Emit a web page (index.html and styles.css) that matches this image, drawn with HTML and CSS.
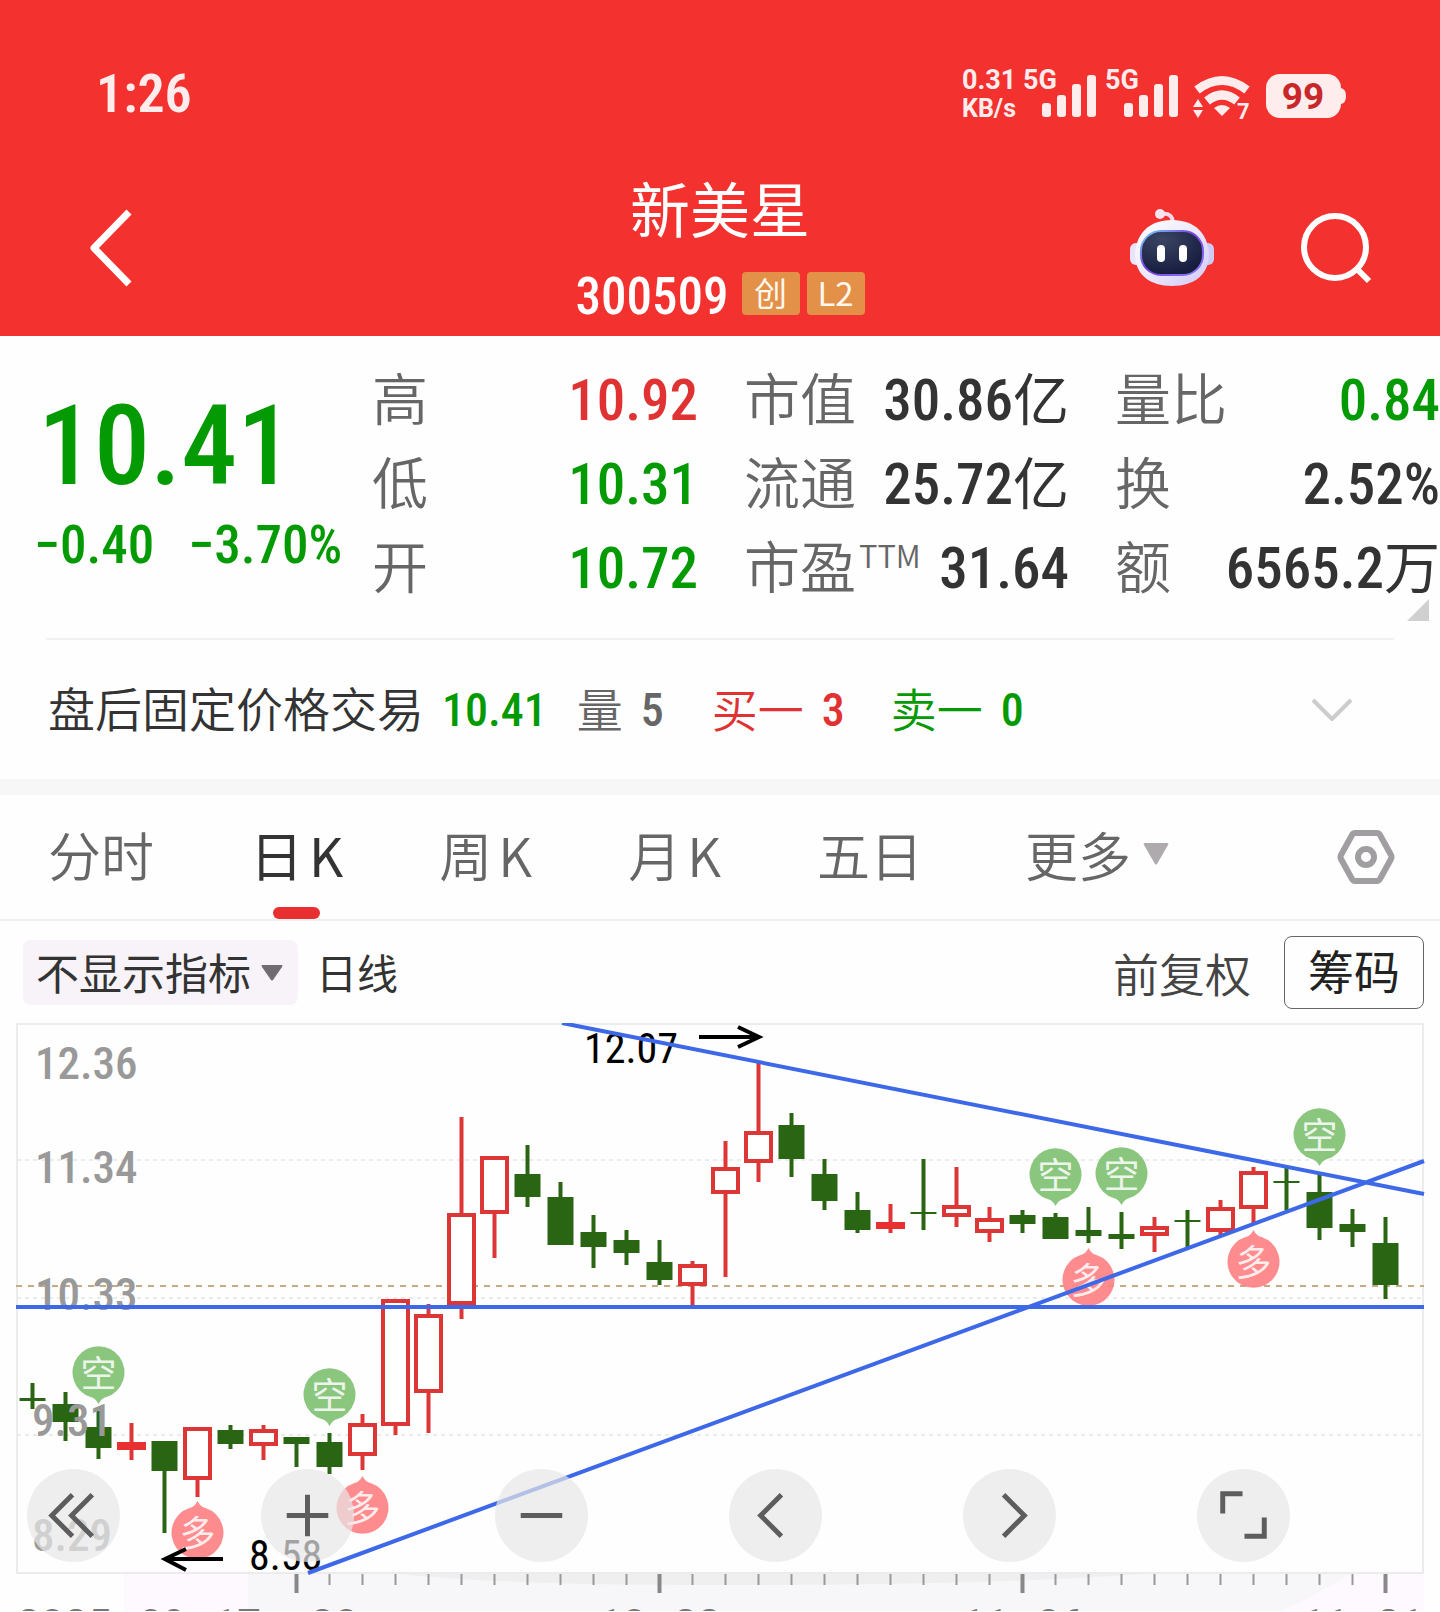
FILE: index.html
```
<!DOCTYPE html>
<html lang="zh-CN">
<head>
<meta charset="utf-8">
<meta name="viewport" content="width=device-width, initial-scale=1">
<title>新美星 300509</title>
<link rel="stylesheet" href="styles.css">
</head>
<body>
<header class="top">
  <div class="status">
    <time class="clock num">1:26</time>
    <svg class="status-icons" width="386" height="60" viewBox="-2 -6 386 60" role="img" aria-label="网络与电量">
      <g class="status-text">
        <text x="0" y="20">0.31</text>
        <text x="0" y="48" class="small">KB/s</text>
        <text x="61" y="20">5G</text>
        <text x="143" y="20">5G</text>
      </g>
      <g class="status-fill">
        <rect x="80" y="34" width="9" height="14" rx="3"/><rect x="95" y="26" width="9" height="22" rx="3"/><rect x="110" y="15" width="9" height="33" rx="3"/><rect x="125" y="6" width="9" height="42" rx="3"/>
        <rect x="162" y="34" width="9" height="14" rx="3"/><rect x="177" y="26" width="9" height="22" rx="3"/><rect x="192" y="15" width="9" height="33" rx="3"/><rect x="207" y="6" width="9" height="42" rx="3"/>
        <path d="M260 47l-8-8q8-6 16 0z"/>
        <path d="M236 30l5 8h-10zM236 49l-5-8h10z"/>
        <rect x="304" y="5" width="75" height="44" rx="14"/>
        <path d="M379 19q5 1 5 8t-5 8z"/>
      </g>
      <path class="wifi" d="M235 21q25-19 50 0M245 32q15-12 30 0"/>
      <text x="275" y="50" class="wifi-gen">7</text>
      <text x="341" y="40" class="charge">99</text>
    </svg>
  </div>
  <nav class="nav">
    <button class="icon-btn back" aria-label="返回">
      <svg width="46" height="80" viewBox="0 0 46 80"><path d="M43 4L8 40l35 36"/></svg>
    </button>
    <div class="stock">
      <h1>新美星</h1>
      <div class="code"><span class="num">300509</span><span class="badges"><span class="badge">创</span><span class="badge">L2</span></span></div>
    </div>
    <div class="nav-actions">
      <button class="icon-btn" aria-label="智能助手">
        <svg width="86" height="80" viewBox="0 0 86 80">
          <defs>
            <linearGradient id="shell" x1="0" y1="0" x2="1" y2="1"><stop offset="0" stop-color="#fff"/><stop offset=".5" stop-color="#ece8fd"/><stop offset="1" stop-color="#cfc8f6"/></linearGradient>
            <linearGradient id="rim" x1="0" y1="0" x2="1" y2="1"><stop offset="0" stop-color="#6fd6f0"/><stop offset=".45" stop-color="#7a3fe0"/><stop offset="1" stop-color="#8a7cf5"/></linearGradient>
            <radialGradient id="face" cx=".35" cy=".2" r=".8"><stop offset="0" stop-color="#3c4464"/><stop offset="1" stop-color="#151c3d"/></radialGradient>
          </defs>
          <path d="M32 6q12-2 12 10" fill="none" stroke="#f3d9ea" stroke-width="4"/>
          <circle cx="31" cy="6" r="5" fill="#f6e3f3"/>
          <rect x="1" y="35" width="12" height="22" rx="6" fill="#e9e4fb"/><rect x="73" y="35" width="12" height="22" rx="6" fill="#cfc9f5"/>
          <path d="M43 12C66 12 79 26 80 46C80 66 66 78 43 78S6 66 6 46C7 26 20 12 43 12z" fill="url(#shell)"/>
          <rect x="12" y="23" width="62" height="44" rx="20" fill="url(#face)" stroke="url(#rim)" stroke-width="2"/>
          <rect x="28" y="37" width="8" height="17" rx="4" fill="#fff"/><rect x="50" y="37" width="8" height="17" rx="4" fill="#fff"/>
        </svg>
      </button>
      <button class="icon-btn search" aria-label="搜索">
        <svg width="72" height="72" viewBox="0 0 72 72"><circle cx="34" cy="35" r="31"/><path d="M56 57l12 12"/></svg>
      </button>
    </div>
  </nav>
</header>

<main>
<section class="quote">
  <div class="price num down">
    <strong>10.41</strong>
    <div class="change"><span>−0.40</span><span>−3.70%</span></div>
  </div>
  <dl>
    <div><dt>高</dt><dd class="num up">10.92</dd></div>
    <div><dt>低</dt><dd class="num down">10.31</dd></div>
    <div><dt>开</dt><dd class="num down">10.72</dd></div>
  </dl>
  <dl>
    <div><dt>市值</dt><dd class="num">30.86<span class="unit">亿</span></dd></div>
    <div><dt>流通</dt><dd class="num">25.72<span class="unit">亿</span></dd></div>
    <div><dt>市盈<sup>TTM</sup></dt><dd class="num">31.64</dd></div>
  </dl>
  <dl>
    <div><dt>量比</dt><dd class="num down">0.84</dd></div>
    <div><dt>换</dt><dd class="num">2.52%</dd></div>
    <div><dt>额</dt><dd class="num">6565.2<span class="unit">万</span></dd></div>
  </dl>
  <svg class="corner" width="22" height="22" viewBox="0 0 22 22"><path d="M22 0v22H0z"/></svg>
</section>

<section class="after-hours">
  <span class="ah-title">盘后固定价格交易</span>
  <span class="num down">10.41</span>
  <span class="pair volume"><span class="label">量</span><span class="num">5</span></span>
  <span class="pair up"><span class="label">买一</span><span class="num">3</span></span>
  <span class="pair down"><span class="label">卖一</span><span class="num">0</span></span>
  <button class="icon-btn expand" aria-label="展开"><svg width="42" height="26" viewBox="0 0 42 26"><path d="M2 3l19 19L40 3"/></svg></button>
</section>

<nav class="tabs">
  <button>分时</button>
  <button class="active">日<span>K</span></button>
  <button>周<span>K</span></button>
  <button>月<span>K</span></button>
  <button>五日</button>
  <button class="more">更多<svg width="26" height="22" viewBox="0 0 26 22"><path d="M2 0h22q2 0 1 2L14 21q-1 1-2 0L1 2q-1-2 1-2z"/></svg></button>
  <button class="settings" aria-label="设置"><svg width="58" height="56" viewBox="0 0 58 56"><path d="M18 4h22q2 0 3 2l11 20q1 2 0 4L43 50q-1 2-3 2H18q-2 0-3-2L4 30q-1-2 0-4L15 6q1-2 3-2z"/><circle cx="29" cy="28" r="8"/></svg></button>
</nav>

<div class="tools">
  <label class="indicator">
    <select aria-label="指标"><option>不显示指标</option></select>
    <svg width="22" height="16" viewBox="0 0 22 16"><path d="M1 0h20q1 0 0 2l-9 13q-1 1-2 0L1 2q-1-2 0-2z"/></svg>
  </label>
  <span class="period">日线</span>
  <button class="adjust">前复权</button>
  <button class="chips">筹码</button>
</div>

<section class="chart">
  <svg id="kline" viewBox="0 0 1440 588" role="img" aria-label="日K线图"></svg>
  <div class="controls">
    <button aria-label="折叠"><svg viewBox="0 0 94 94"><path d="M46 26L25 47l21 21M66 26L45 47l21 21"/></svg></button>
    <button aria-label="放大"><svg viewBox="0 0 94 94"><path d="M26 47h42M47 26v42"/></svg></button>
    <button aria-label="缩小"><svg viewBox="0 0 94 94"><path d="M26 47h42"/></svg></button>
    <button aria-label="左移"><svg viewBox="0 0 94 94"><path d="M53 26L32 47l21 21"/></svg></button>
    <button aria-label="右移"><svg viewBox="0 0 94 94"><path d="M41 26l21 21-21 21"/></svg></button>
    <button aria-label="全屏"><svg viewBox="0 0 94 94"><path d="M26 45V25h20M68 49v19H48"/></svg></button>
  </div>
</section>
</main>
<script src="chart.js"></script>
</body>
</html>
```
FILE: styles.css
```
* { box-sizing: border-box; }
body {
  margin: 0;
  background: #fefefe;
  color: #333;
  font-family: "Noto Sans CJK SC", sans-serif;
  overflow-x: hidden;
}
button, select {
  border: 0;
  padding: 0;
  margin: 0;
  background: none;
  color: inherit;
  font: inherit;
}
svg { display: block; }
.num { font-family: "Roboto Condensed", Roboto, "Noto Sans CJK SC", sans-serif; font-weight: 500; }
.up { color: #e03232; }
.down { color: #049a04; }
.icon-btn { display: flex; flex: none; }
.icon-btn path, .icon-btn circle { stroke-linejoin: round; }

/* header */
.top { background: #f3312f; color: #fff; }
.status {
  display: flex;
  align-items: center;
  justify-content: space-between;
  height: 160px;
  padding: 26px 94px 0 96px;
}
.clock { color: #ffecec; font-size: 54px; font-weight: 600; }
.status-icons { overflow: visible; }
.status-text { font: 700 27px Roboto, sans-serif; fill: #ffecec; }
.status-text .small { font-size: 25px; }
.status-fill { fill: #ffecec; }
.wifi { fill: none; stroke: #ffecec; stroke-width: 9; }
.wifi-gen { font: 700 22px Roboto, sans-serif; fill: #ffecec; }
.charge { font: 700 37px Roboto, sans-serif; fill: #c8282a; text-anchor: middle; }
.nav {
  display: grid;
  grid-template-columns: 1fr auto 1fr;
  align-items: center;
  height: 176px;
  padding: 0 67px 0 86px;
}
.back path { fill: none; stroke: #fff; stroke-width: 7; }
.search { fill: none; stroke: #fff; stroke-width: 6; }
.stock { text-align: center; padding-right: 19px; }
.stock h1 { margin: 0; font-size: 60px; line-height: 94px; font-weight: 400; }
.code {
  display: flex;
  align-items: center;
  justify-content: center;
  gap: 13px;
  height: 82px;
  font-size: 51px;
}
.code .num { line-height: 82px; padding-top: 4px; }
.badges { display: flex; gap: 7px; margin-bottom: 4px; }
.badge {
  width: 58px;
  height: 43px;
  border-radius: 4px;
  background: #e39048;
  color: #fff8ee;
  font-size: 33px;
  line-height: 41px;
}
.nav-actions { display: flex; align-items: center; justify-content: flex-end; gap: 86px; }

/* quote */
.quote {
  position: relative;
  display: grid;
  grid-template-columns: minmax(0, 326fr) minmax(0, 326fr) minmax(0, 325fr) minmax(0, 325fr);
  column-gap: 46px;
  padding: 20px 0 30px;
}
.price { padding: 22px 0 0 34px; white-space: nowrap; }
.price strong { display: block; padding-left: 4px; font-size: 112px; line-height: 136px; font-weight: 500; }
.change { display: flex; gap: 34px; font-size: 53px; line-height: 62px; }
.quote dl { margin: 0; }
.quote dl div { display: flex; justify-content: space-between; align-items: flex-start; height: 84px; white-space: nowrap; }
.quote dt { color: #666; font-size: 56px; line-height: 80px; font-weight: 350; }
.quote dd { margin: 0; font-size: 57px; line-height: 90px; }
.quote dd:not(.up):not(.down) { color: #333; }
.unit { font-family: "Noto Sans CJK SC", sans-serif; font-size: 56px; line-height: 1; font-weight: 400; }
.quote sup { margin-left: 3px; font-size: 31px; line-height: 1; vertical-align: 20px; }
.corner { position: absolute; right: 11px; bottom: 17px; fill: #d0d0d0; }

.after-hours {
  display: flex;
  align-items: center;
  height: 141px;
  margin: 0 46px;
  border-top: 2px solid #f1f1f1;
  font-size: 46px;
}
.ah-title { margin: 0 18px 0 2px; padding-bottom: 6px; font-size: 47px; font-weight: 350; }
.label { padding-bottom: 6px; }
.after-hours .pair { display: flex; align-items: center; gap: 18px; font-weight: 350; }
.volume { color: #666; margin: 0 48px 0 30px; }
.after-hours .pair.down { margin-left: 46px; }
.expand { margin-left: auto; padding-right: 41px; fill: none; stroke: #ccc; stroke-width: 4; }

/* tabs */
.tabs {
  display: flex;
  align-items: center;
  gap: 96px;
  height: 142px;
  padding: 0 45px 0 48px;
  border-top: 16px solid #f7f7f7;
  border-bottom: 2px solid #f0f0f0;
  color: #666;
  font-size: 53px;
  font-weight: 350;
}
.tabs button { position: relative; flex: none; line-height: 118px; padding-bottom: 6px; }
.tabs span { margin-left: 6px; }
.tabs .active { color: #333; font-weight: 400; }
.tabs .active::after {
  content: "";
  position: absolute;
  left: 50%;
  bottom: 0;
  width: 47px;
  height: 12px;
  margin-left: -24px;
  border-radius: 6px;
  background: #e93030;
}
.tabs .more { display: flex; align-items: center; gap: 12px; margin-left: 6px; }
.more svg { fill: #aeaaae; }
.tabs .settings { margin-left: auto; padding: 0; fill: none; stroke: #a09ea0; stroke-width: 6; }

/* tools */
.tools { display: flex; align-items: center; height: 102px; padding: 0 16px 0 23px; }
.indicator { position: relative; }
.indicator select {
  display: block;
  appearance: none;
  width: 275px;
  height: 65px;
  padding: 0 0 5px 13px;
  border-radius: 8px;
  background: #f7f3f8;
  font-size: 43px;
}
.indicator svg { position: absolute; right: 15px; top: 25px; fill: #6f6d6f; }
.period { margin-left: 18px; padding-bottom: 3px; font-size: 41px; }
.adjust { margin-left: auto; color: #444; font-size: 46px; font-weight: 350; }
.chips {
  width: 140px;
  height: 73px;
  margin-left: 33px;
  padding-bottom: 6px;
  border: 1px solid #666;
  border-radius: 8px;
  color: #222;
  font-size: 46px;
  line-height: 64px;
}

/* chart */
.chart { position: relative; }
.chart > svg { width: 100%; height: auto; }
.frame { fill: none; stroke: #ececec; stroke-width: 2; }
.grid { stroke: #ebebeb; stroke-width: 2; stroke-dasharray: 4 4; }
.last { stroke: #c4ab84; stroke-width: 2; stroke-dasharray: 6 6; }
.trend { fill: none; stroke: #3d68e8; stroke-width: 4; }
.rise { stroke: #dd3636; stroke-width: 4; fill: #fff; }
.flat { fill: #e93030; }
.fall { stroke: #2a6514; stroke-width: 4; fill: #2a6514; }
.fall rect { stroke: none; }
.scale { font: 500 45px "Roboto Condensed", Roboto, sans-serif; fill: #999; }
.mark { font: 400 42px "Roboto Condensed", Roboto, sans-serif; fill: #000; }
.arrow { fill: none; stroke: #000; stroke-width: 4; }
.bubble { opacity: .92; }
.bubble text { font: 400 36px "Noto Sans CJK SC", sans-serif; fill: #fff; fill-opacity: .85; text-anchor: middle; }
.short path { fill: #82c274; }
.long path { fill: #ff8386; }
.tick { stroke: #999; stroke-width: 2; }
.tick.major { stroke: #888; stroke-width: 4; }
.dates { font: 400 42px Roboto, sans-serif; fill: #777; }
.controls {
  position: absolute;
  left: 27px;
  right: 150px;
  bottom: 49px;
  display: flex;
  justify-content: space-between;
}
.controls button { width: 93px; height: 93px; border-radius: 50%; background: rgba(231, 231, 231, .7); }
.controls svg { width: 93px; height: 93px; fill: none; stroke: #5d5d5d; stroke-width: 5; }
```
FILE: chart.js
```
// Each candle: [kind, high, top, bottom, low]; r = rise, g = fall. Values are chart y positions.
const candles = [
  ['g',360,375,378,386],['g',369,381,399,418],['g',388,404,425,436],['r',400,419,427,437],['g',418,418,448,510],
  ['r',404,404,457,474],['g',402,407,421,426],['r',402,406,423,437],['g',414,414,421,444],['g',410,419,444,451],
  ['r',391,400,433,447],['r',276,276,403,412],['r',281,291,370,410],['r',94,190,282,296],['r',133,133,191,235],
  ['g',122,151,174,184],['g',159,174,222,222],['g',192,209,224,245],['g',207,217,230,242],['g',217,239,257,262],
  ['r',238,241,263,282],['r',118,144,171,254],['r',39,108,140,159],['g',90,102,136,154],['g',136,151,178,187],
  ['g',169,187,207,210],['r',181,199,206,210],['g',136,189,191,207],['r',144,182,194,204],['r',184,195,210,219],
  ['g',187,192,201,210],['g',190,194,216,216],['g',184,207,213,220],['g',189,211,216,226],['r',194,203,213,229],
  ['g',187,197,199,225],['r',177,184,209,213],['r',144,148,186,200],['g',145,158,160,187],['g',151,169,205,217],
  ['g',186,201,209,224],['g',194,220,262,276]
];
const cx = i => 32.5 + 33 * i;
let out = '<path fill="#fdf9fe" d="M124 551H1424V588H124z"/><path fill="#f7f6f8" d="M248 551H1350Q1310 576 1280 588H248z"/><path fill="#efefef" d="M400 551H1140Q1000 562 720 562Q500 562 400 551z"/>';
out += '<rect class="frame" x="17" y="1" width="1406" height="549"/>';
for (const y of [137, 275, 412]) out += `<path class="grid" d="M17 ${y}H1423"/>`;
out += '<path class="last" d="M16 263H1424"/>';

const short = (i, y) => `<g class="bubble short"><path d="M${cx(i)} ${y + 30}q-3-6-8-7a26 26 0 1 1 16 0q-5 1-8 7z"/><text x="${cx(i)}" y="${y + 13}">空</text></g>`;
const long = (i, y) => `<g class="bubble long"><path d="M${cx(i)} ${y - 32}q3 6 8 7a26 26 0 1 1-16 0q5-1 8-7z"/><text x="${cx(i)}" y="${y + 14}">多</text></g>`;

candles.forEach(([k, h, t, b, l], i) => {
  const x = cx(i);
  if (k === 'r') {
    out += `<g class="rise"><path d="M${x} ${h}V${l}"/><rect x="${x - 12.5}" y="${t + 2}" width="25" height="${Math.max(b - t - 4, 1)}"/></g>`;
    if (b - t < 9) out += `<rect class="flat" x="${x - 14}" y="${t}" width="28" height="${b - t}"/>`;
  } else {
    out += `<g class="fall"><path d="M${x} ${h}V${l}"/><rect x="${x - 13}" y="${t}" width="26" height="${b - t}"/></g>`;
  }
});
out += short(2, 351) + short(9, 373) + short(31, 153) + short(33, 152) + short(39, 113);
out += long(5, 510) + long(10, 485) + long(32, 257) + long(37, 239);

out += '<g class="scale"><text x="35" y="56">12.36</text><text x="35" y="160">11.34</text><text x="35" y="287">10.33</text><text x="32" y="413">9.31</text><text x="32" y="528">8.29</text></g>';
out += '<g class="mark"><text x="584" y="40">12.07</text><text x="249" y="547">8.58</text></g>';
out += '<path class="arrow" d="M699 14H758M738 4l21 10l-21 10M223 536H166M186 526l-21 10l21 11"/>';
out += '<path class="trend" d="M16 284H1424M562 0L1424 171M308 550L1424 138"/>';

for (let i = 8; i < 42; i++) {
  const major = (i - 8) % 11 === 0;
  out += `<path class="tick${major ? ' major' : ''}" d="M${cx(i)} 551v${major ? 19 : 11}"/>`;
}
out += '<g class="dates"><text x="17" y="616">2025–09–17</text><text x="311" y="616">30</text><text x="660" y="616" text-anchor="middle">10–22</text><text x="1023" y="616" text-anchor="middle">11–06</text><text x="1424" y="616" text-anchor="end">11–21</text></g>';
document.getElementById('kline').innerHTML = out;
```
